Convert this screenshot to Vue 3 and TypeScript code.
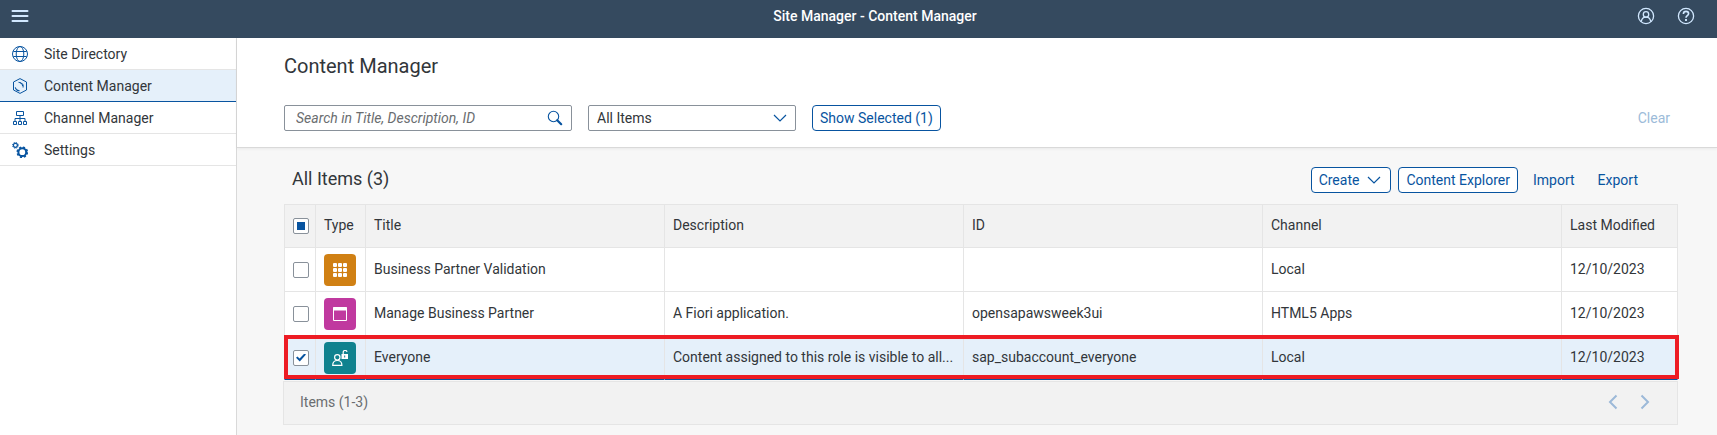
<script setup lang="ts">
import { computed, ref } from 'vue'

type Kind = 'group' | 'app' | 'role'

interface Item {
  kind: Kind
  title: string
  description: string
  id: string
  channel: string
  modified: string
  selected: boolean
}

const nav = [
  { key: 'globe', label: 'Site Directory' },
  { key: 'product', label: 'Content Manager' },
  { key: 'tree', label: 'Channel Manager' },
  { key: 'gears', label: 'Settings' },
]
const active = ref('product')
const filter = ref('All Items')
const query = ref('')

const items = ref<Item[]>([
  { kind: 'group', title: 'Business Partner Validation', description: '', id: '', channel: 'Local', modified: '12/10/2023', selected: false },
  { kind: 'app', title: 'Manage Business Partner', description: 'A Fiori application.', id: 'opensapawsweek3ui', channel: 'HTML5 Apps', modified: '12/10/2023', selected: false },
  { kind: 'role', title: 'Everyone', description: 'Content assigned to this role is visible to all...', id: 'sap_subaccount_everyone', channel: 'Local', modified: '12/10/2023', selected: true },
])

const selectedCount = computed(() => items.value.filter((i) => i.selected).length)
const allSelected = computed(() => selectedCount.value === items.value.length)
const someSelected = computed(() => selectedCount.value > 0 && !allSelected.value)

function toggleAll() {
  const next = !allSelected.value
  items.value.forEach((i) => (i.selected = next))
}
</script>

<template>
  <div class="shell">
    <header class="bar">
      <button class="bar-btn" aria-label="Menu">
        <svg width="18" height="14" viewBox="0 0 18 14" fill="none" stroke="#d1e8ff" stroke-width="2" stroke-linecap="round">
          <path d="M1.5 2h15M1.5 7h15M1.5 12h15" />
        </svg>
      </button>
      <span class="bar-title">Site Manager - Content Manager</span>
      <div class="bar-actions">
        <button class="bar-btn" aria-label="User">
          <svg width="18" height="18" viewBox="0 0 18 18" fill="none" stroke="#d1e8ff" stroke-width="1.3">
            <circle cx="9" cy="9" r="7.6" />
            <circle cx="9" cy="7.4" r="2.7" />
            <path d="M4.3 14.8c.3-3 2.2-4.7 4.7-4.7s4.4 1.7 4.7 4.7" />
          </svg>
        </button>
        <button class="bar-btn" aria-label="Help">
          <svg width="18" height="18" viewBox="0 0 18 18" fill="none" stroke="#d1e8ff" stroke-width="1.3">
            <circle cx="9" cy="9" r="7.6" />
            <path d="M6.4 7c0-1.6 1.1-2.6 2.6-2.6s2.6 1 2.6 2.4c0 1.9-2.6 2-2.6 4" stroke-width="1.6" />
            <path d="M9 12.1v1.8" stroke-width="1.9" />
          </svg>
        </button>
      </div>
    </header>

    <div class="body">
      <nav class="side">
        <a v-for="n in nav" :key="n.key" href="#" class="side-item" :class="{ active: n.key === active }" @click.prevent="active = n.key">
          <svg width="16" height="16" viewBox="0 0 16 16" fill="none" stroke="#0854a0" stroke-width="1">
            <template v-if="n.key === 'globe'">
              <circle cx="8" cy="8" r="7.5" />
              <ellipse cx="8" cy="8" rx="3.8" ry="7.5" />
              <path d="M1.3 5.5h13.4M1.3 10.5h13.4" />
            </template>
            <template v-else-if="n.key === 'product'">
              <path d="M8 .6L14.5 4v8L8 15.4 1.5 12V4z" />
              <path d="M6.5 4.3c1.7.2 3.3 1 4.6 2.2v3M7.4 4.5c2 .6 3 1.7 3.2 3.5M3.3 9.3c.4 1.9 1.9 3 4.2 3.4M3.5 10.2l1.2 2.1 2.5.6" />
            </template>
            <template v-else-if="n.key === 'tree'">
              <path d="M4.5 1.5h7v4h-7zM1.5 11.5h3v3h-3zM6.5 11.5h3v3h-3zM11.5 11.5h3v3h-3zM8 5.5v6M3 11.500v-3h10v3" />
            </template>
            <template v-else>
              <circle cx="10.3" cy="10.2" r="3.9" stroke-width="2" />
              <circle cx="10.3" cy="10.2" r="5.1" stroke-width="1.5" stroke-dasharray="2.2 1.805" />
              <circle cx="3.4" cy="3.3" r="2" stroke-width="1.2" />
              <circle cx="3.4" cy="3.3" r="2.9" stroke-width="1" stroke-dasharray="1.2 1.078" />
            </template>
          </svg>
          <span>{{ n.label }}</span>
        </a>
      </nav>

      <main class="main">
        <section class="head">
          <h1>Content Manager</h1>
          <div class="filters">
            <div class="field search">
              <input v-model="query" type="text" aria-label="Search" placeholder="Search in Title, Description, ID" />
              <button class="icon-btn" aria-label="Run search">
                <svg width="16" height="16" viewBox="0 0 16 16" fill="none" stroke="#0854a0">
                  <circle cx="6.5" cy="6.5" r="5.2" stroke-width="1.1" />
                  <path d="M10.2 10.2l4 4" stroke-width="2.2" stroke-linecap="round" />
                </svg>
              </button>
            </div>
            <div class="field picker">
              <select v-model="filter" aria-label="Item type">
                <option>All Items</option>
                <option>Apps</option>
                <option>Roles</option>
              </select>
              <svg class="arrow" width="14" height="8" viewBox="0 0 14 8" fill="none" stroke="#0854a0" stroke-width="1.2"><path d="M1 1l6 6 6-6" /></svg>
            </div>
            <button class="btn">Show Selected ({{ selectedCount }})</button>
            <button class="btn plain clear" disabled>Clear</button>
          </div>
        </section>

        <section class="content">
          <div class="toolbar">
            <h2>All Items ({{ items.length }})</h2>
            <button class="btn create">
              Create
              <svg width="14" height="8" viewBox="0 0 14 8" fill="none" stroke="#0854a0" stroke-width="1.2"><path d="M1 1l6 6 6-6" /></svg>
            </button>
            <button class="btn">Content Explorer</button>
            <button class="btn plain">Import</button>
            <button class="btn plain">Export</button>
          </div>

          <table>
            <colgroup>
              <col class="c-check" />
              <col class="c-type" />
              <col />
              <col />
              <col />
              <col />
              <col class="c-date" />
            </colgroup>
            <thead>
              <tr>
                <th class="check"><input type="checkbox" aria-label="Select all" :checked="allSelected" :indeterminate.prop="someSelected" @change="toggleAll" /></th>
                <th>Type</th>
                <th>Title</th>
                <th>Description</th>
                <th>ID</th>
                <th>Channel</th>
                <th>Last Modified</th>
              </tr>
            </thead>
            <tbody>
              <tr v-for="i in items" :key="i.title" :class="{ selected: i.selected }">
                <td class="check">
                  <input v-model="i.selected" type="checkbox" :aria-label="'Select ' + i.title" />
                  <span v-if="i.selected" class="frame"></span>
                </td>
                <td class="type">
                  <span class="tile" :class="i.kind">
                    <svg width="16" height="16" viewBox="0 0 16 16" fill="none" stroke="#fff">
                      <template v-if="i.kind === 'group'">
                        <g fill="#fff" stroke="none">
                          <template v-for="r in 3" :key="r">
                            <rect v-for="c in 3" :key="c" :x="c * 5 - 4" :y="r * 5 - 4" width="4" height="4" rx="1" />
                          </template>
                        </g>
                      </template>
                      <template v-else-if="i.kind === 'app'">
                        <path d="M1.5 1.5h13v13h-13z" />
                        <path d="M1 3h14" stroke-width="3" />
                      </template>
                      <template v-else>
                        <circle cx="5.3" cy="7.3" r="2.7" stroke-width="1.2" />
                        <path d="M.7 15.4c0-3.2 1.5-4.9 4.6-4.9s4.6 1.7 4.6 4.9z" stroke-width="1.2" />
                        <path d="M9.5 4h6.5v5H9.5z" fill="#fff" stroke="none" />
                        <path d="M11.2 4.5V2.4c0-1.200.7-2 1.900-2s1.800.6 1.900 1.500" stroke-width="1.2" />
                        <path d="M12.7 5.5v2" stroke="#0f828f" />
                      </template>
                    </svg>
                  </span>
                </td>
                <td>{{ i.title }}</td>
                <td>{{ i.description }}</td>
                <td>{{ i.id }}</td>
                <td>{{ i.channel }}</td>
                <td>{{ i.modified }}</td>
              </tr>
            </tbody>
          </table>

          <footer class="pager">
            <span>Items (1-{{ items.length }})</span>
            <div class="pager-nav">
              <button class="icon-btn" aria-label="Previous page" disabled>
                <svg width="10" height="16" viewBox="0 0 10 16" fill="none" stroke="#9cb9d8" stroke-width="2"><path d="M8.5 1.5L2 8l6.5 6.5" /></svg>
              </button>
              <button class="icon-btn" aria-label="Next page" disabled>
                <svg width="10" height="16" viewBox="0 0 10 16" fill="none" stroke="#9cb9d8" stroke-width="2"><path d="M1.5 1.5L8 8l-6.5 6.5" /></svg>
              </button>
            </div>
          </footer>
        </section>
      </main>
    </div>
  </div>
</template>

<style>
body {
  margin: 0;
  background: #f7f7f7;
}
</style>

<style scoped>
* {
  box-sizing: border-box;
}
.shell {
  min-height: 100vh;
  display: flex;
  flex-direction: column;
  font-family: Roboto, "Liberation Sans", sans-serif;
  font-size: 14px;
  line-height: 20px;
  color: #32363a;
}
button,
input,
select {
  font: inherit;
  margin: 0;
}
button {
  cursor: pointer;
}
svg {
  display: block;
  flex: none;
}
.bar {
  display: grid;
  grid-template-columns: 1fr auto 1fr;
  align-items: center;
  height: 38px;
  padding: 0 22px 6px 11px;
  background: #354a5f;
}
.bar-btn,
.icon-btn {
  display: flex;
  padding: 0;
  border: 0;
  background: none;
}
.bar-title {
  padding-left: 44px;
  color: #fff;
  font-weight: 500;
}
.bar-actions {
  display: flex;
  justify-content: flex-end;
  gap: 22px;
}
.body {
  flex: 1;
  display: flex;
}
.side {
  flex: none;
  width: 237px;
  border-right: 1px solid #d9d9d9;
  background: #fff;
}
.side-item {
  display: flex;
  align-items: center;
  gap: 16px;
  height: 32px;
  padding-left: 12px;
  border-bottom: 1px solid #e5e5e5;
  color: #32363a;
  text-decoration: none;
}
.side-item.active {
  background: #e5f0fa;
  border-bottom-color: #0854a0;
}
.main {
  flex: 1;
  min-width: 0;
  background: #f7f7f7;
}
.head {
  padding: 16px 39px 16px 47px;
  background: #fff;
  border-bottom: 1px solid #d9d9d9;
  box-shadow: 0 1px 3px rgba(0, 0, 0, 0.06);
}
h1,
h2 {
  margin: 0;
  font-weight: 400;
  line-height: 24px;
}
h1 {
  font-size: 20px;
}
h2 {
  flex: 1;
  padding-bottom: 2px;
  font-size: 18px;
}
.filters {
  display: flex;
  gap: 16px;
  margin-top: 27px;
}
.field {
  display: flex;
  align-items: center;
  height: 26px;
  border: 1px solid #89919a;
  border-radius: 2px;
  background: #fff;
}
.search {
  width: 288px;
  padding-right: 8px;
}
.search input {
  flex: 1;
  min-width: 0;
  height: 24px;
  padding: 0 0 0 11px;
  border: 0;
  outline: 0;
  background: none;
  color: #32363a;
}
.search input::placeholder {
  color: #6a6d70;
  font-style: italic;
}
.picker {
  display: grid;
  width: 208px;
}
.picker select {
  grid-area: 1 / 1;
  width: 100%;
  height: 24px;
  padding: 0 32px 0 8px;
  border: 0;
  appearance: none;
  background: none;
  color: #32363a;
}
.picker .arrow {
  grid-area: 1 / 1;
  justify-self: end;
  margin-right: 8px;
  pointer-events: none;
}
.btn {
  display: flex;
  align-items: center;
  justify-content: center;
  height: 26px;
  padding: 0 7px;
  border: 1px solid #0854a0;
  border-radius: 4px;
  background: #fff;
  color: #0854a0;
  white-space: nowrap;
}
.btn.plain {
  border-color: transparent;
  background: none;
}
.btn.create {
  gap: 8px;
  padding-right: 9px;
}
.clear {
  margin-left: auto;
}
.clear:disabled {
  color: #9cbbd9;
}
.content {
  padding: 19px 39px 10px 47px;
}
.toolbar {
  display: flex;
  align-items: center;
  gap: 7px;
  margin-bottom: 11px;
  padding: 0 32px 0 8px;
}
table {
  width: 100%;
  table-layout: fixed;
  border-collapse: separate;
  border-spacing: 0;
}
.c-check {
  width: 32px;
}
.c-type {
  width: 50px;
}
.c-date {
  width: 116px;
}
th,
td {
  height: 44px;
  padding: 0 8px 2px;
  border-right: 1px solid #e5e5e5;
  border-bottom: 1px solid #e5e5e5;
  background: #fff;
  font-weight: 400;
  text-align: left;
  vertical-align: middle;
  overflow: hidden;
  text-overflow: ellipsis;
  white-space: nowrap;
}
th {
  border-top: 1px solid #e5e5e5;
  background: #f2f2f2;
}
.check,
.type {
  padding-bottom: 0;
}
.check {
  border-left: 1px solid #e5e5e5;
}
.check input {
  display: grid;
  place-items: center;
  width: 16px;
  height: 16px;
  border: 1px solid #89919a;
  border-radius: 2px;
  background: #fff;
  appearance: none;
}
.check input:indeterminate::before {
  content: "";
  width: 8px;
  height: 8px;
  background: #0854a0;
}
.check input:checked::before {
  content: "";
  width: 10px;
  height: 8px;
  background: #0854a0;
  clip-path: polygon(0 52%, 14% 36%, 36% 62%, 84% 0, 100% 14%, 38% 100%);
}
tr.selected {
  position: relative;
}
.selected td {
  background: #e5f0fa;
  border-bottom-color: #0854a0;
}
/* Emphasis frame drawn over the whole selected row */
.frame {
  position: absolute;
  inset: -1px -1px 1px 0;
  border: 4px solid #ed1c24;
  pointer-events: none;
}
.tile {
  display: grid;
  place-items: center;
  width: 32px;
  height: 32px;
  border-radius: 4px;
}
.group {
  background: #d08014;
}
.app {
  background: #c0399f;
}
.role {
  background: #0f828f;
}
.pager {
  display: flex;
  align-items: center;
  justify-content: space-between;
  height: 44px;
  margin: 1px 0 0 -1px;
  padding: 0 27px 2px 16px;
  border: 1px solid #e5e5e5;
  background: #f2f2f2;
  color: #6a6d70;
}
.pager-nav {
  display: flex;
  gap: 22px;
}
</style>
